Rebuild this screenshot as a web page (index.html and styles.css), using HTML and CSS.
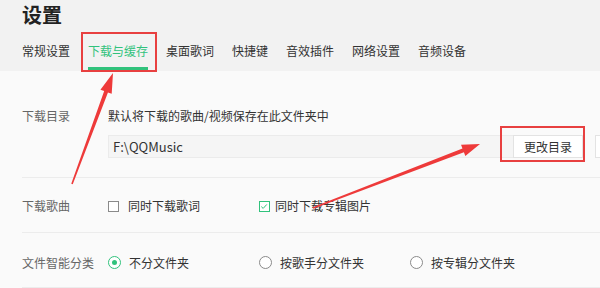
FILE: index.html
```html
<!DOCTYPE html>
<html lang="zh-CN">
<head>
<meta charset="utf-8">
<title>设置</title>
<link rel="stylesheet" href="styles.css">
</head>
<body>
<div class="page">
  <header class="header">
    <h1 class="title">设置</h1>
    <nav class="tabs">
      <span class="tab">常规设置</span>
      <span class="tab active">下载与缓存</span>
      <span class="tab">桌面歌词</span>
      <span class="tab">快捷键</span>
      <span class="tab">音效插件</span>
      <span class="tab">网络设置</span>
      <span class="tab">音频设备</span>
    </nav>
  </header>
  <main class="content">
    <section class="row row-dir">
      <div class="label">下载目录</div>
      <div class="body">
        <div class="desc">默认将下载的歌曲/视频保存在此文件夹中</div>
        <div class="path-line">
          <div class="path-input">F:\QQMusic</div>
          <div class="btn">更改目录</div>
          <div class="btn btn-cut"></div>
        </div>
      </div>
    </section>
    <section class="row row-opt">
      <div class="label">下载歌曲</div>
      <div class="options">
        <label class="opt opt-wide"><span class="check"></span>同时下载歌词</label>
        <label class="opt"><span class="check checked"><svg viewBox="0 0 11 11" width="11" height="11"><path d="M2.5 5.6 L4.6 7.6 L8.6 3.2" fill="none" stroke="#31c27c" stroke-width="1.1"/></svg></span>同时下载专辑图片</label>
      </div>
    </section>
    <section class="row row-opt row-last">
      <div class="label">文件智能分类</div>
      <div class="options">
        <label class="opt opt-wide"><span class="radio on"></span>不分文件夹</label>
        <label class="opt opt-wide"><span class="radio"></span>按歌手分文件夹</label>
        <label class="opt"><span class="radio"></span>按专辑分文件夹</label>
      </div>
    </section>
  </main>

  <div class="mark mark-tab"></div>
  <div class="mark mark-btn"></div>
  <svg class="arrows" viewBox="0 0 600 288" width="600" height="288">
    <polygon fill="#ee3a3a" points="113,73 111.69,93.84 107.94,92.45 72.75,184.28 71.25,183.72 104.18,91.07 100.43,89.68"/>
    <polygon fill="#ee3a3a" points="480,144 465.34,156.04 463.91,152.31 313.29,208.75 312.71,207.25 462.47,148.57 461.04,144.84"/>
  </svg>
</div>
</body>
</html>
```

FILE: styles.css
```css
* { box-sizing: border-box; }
html, body { margin: 0; padding: 0; }
body {
  width: 600px;
  height: 288px;
  overflow: hidden;
  font-family: "Noto Sans CJK SC", "Noto Sans", "Liberation Sans", sans-serif;
  background: #fafafa;
  color: #333;
}
.page {
  position: relative;
  width: 600px;
  height: 288px;
  overflow: hidden;
}
.header {
  background: #f2f2f2;
  padding-left: 22px;
  height: 71px;
}
.title {
  margin: 0;
  font-size: 20px;
  line-height: 30px;
  font-weight: bold;
  color: #222;
}
.tabs {
  display: flex;
  gap: 18px;
}
.tab {
  font-size: 12px;
  line-height: 17px;
  padding: 12px 0 8px;
  border-bottom: 3px solid transparent;
  color: #333;
  white-space: nowrap;
}
.tab.active {
  color: #31c27c;
  border-bottom-color: #31c27c;
}
.content {
  padding-left: 22px;
}
.row {
  display: flex;
  border-bottom: 1px solid #ececec;
}
.label {
  width: 86px;
  flex: none;
  font-size: 12px;
  line-height: 18px;
  color: #666;
}
.row-dir {
  padding-top: 36px;
  height: 107px;
}
.body { flex: 1; }
.desc {
  font-size: 12px;
  line-height: 18px;
  color: #333;
}
.path-line {
  display: flex;
  margin-top: 10px;
  height: 23px;
}
.path-input {
  width: 405px;
  flex: none;
  background: #f5f5f5;
  border: 1px solid #ebebeb;
  border-right: none;
  font-size: 13px;
  line-height: 21px;
  padding-left: 4px;
  color: #333;
}
.btn {
  width: 70px;
  flex: none;
  background: #fff;
  border: 1px solid #e3e3e3;
  font-size: 12px;
  line-height: 21px;
  text-align: center;
  color: #333;
}
.btn-cut {
  margin-left: 12px;
}
.row-opt {
  height: 55px;
  align-items: center;
  padding-top: 2px;
}
.row-last { padding-top: 5px; }
.options {
  display: flex;
  align-items: center;
}
.opt {
  display: flex;
  align-items: center;
  font-size: 12px;
  line-height: 18px;
  color: #333;
  white-space: nowrap;
}
.opt-wide { width: 151px; }
.check {
  width: 11px;
  height: 11px;
  border: 1px solid #8a8a8a;
  margin-right: 9px;
  display: flex;
  background: #fff;
}
.check svg { display: block; margin: -1px 0 0 -1px; }
.check.checked { border-color: #31c27c; margin-right: 5px; }
.radio {
  width: 13px;
  height: 13px;
  border: 1px solid #8a8a8a;
  border-radius: 50%;
  margin-right: 8px;
  display: flex;
  align-items: center;
  justify-content: center;
  background: #fff;
}
.radio.on { border-color: #31c27c; }
.radio.on::after {
  content: "";
  width: 5px;
  height: 5px;
  border-radius: 50%;
  background: #31c27c;
}
.mark {
  position: absolute;
  border: 2px solid #e84040;
  pointer-events: none;
}
.mark-tab { left: 81px; top: 32px; width: 76px; height: 40px; }
.mark-btn { left: 500px; top: 126px; width: 85px; height: 36px; }
.arrows {
  position: absolute;
  left: 0;
  top: 0;
  pointer-events: none;
}
```
